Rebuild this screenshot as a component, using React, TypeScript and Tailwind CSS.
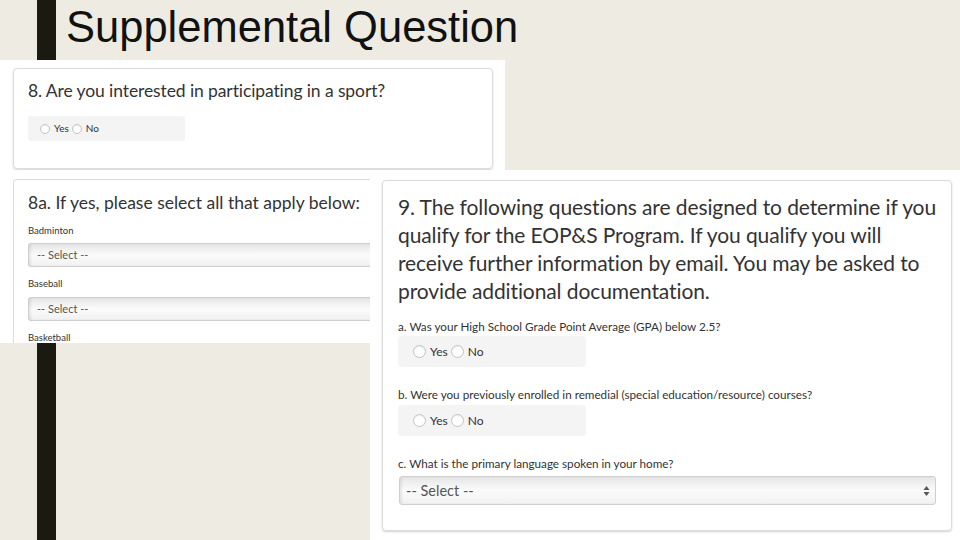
import React from "react";

function Radio({ size, text }: { size: string; text: string }) {
  return (
    <span className="inline-flex items-center">
      <span
        className={`${size} rounded-full border border-[#c4c4c4] bg-white shadow-[inset_0_1px_1px_rgba(0,0,0,0.08)]`}
      />
      <span className="ml-[4px]">{text}</span>
    </span>
  );
}

function SmallSelect() {
  return (
    <div className="h-[24px] w-[360px] rounded-l-[3px] border border-r-0 border-[#cfcfcf] bg-gradient-to-b from-[#e6e6e6] via-[#fbfbfb] to-[#f1f1f1] shadow-[inset_2px_0_2px_rgba(0,0,0,0.08)] flex items-center pl-[8px] text-[11px] text-[#555]">
      -- Select --
    </div>
  );
}

export default function App() {
  return (
    <div className="w-[960px] h-[540px] overflow-hidden bg-[#eeebe3] flex flex-col font-['Lato',sans-serif] text-[#333]">
      {/* title row */}
      <div className="h-[60px] flex shrink-0">
        <div className="ml-[37px] w-[19px] h-full bg-[#1a1a10]" />
        <div className="ml-[10px] mt-[2px] font-['Liberation_Sans',Arial,sans-serif] text-[43.5px] leading-[50px] text-[#111]">
          Supplemental Question
        </div>
      </div>

      {/* screenshot 1 */}
      <div className="w-[505px] h-[110px] bg-white pt-[8px] pl-[13px] pr-[12px] shrink-0">
        <div className="h-[101px] rounded-[4px] border border-[#dcdcdc] shadow-[0_1px_2px_rgba(0,0,0,0.18)] pl-[14px] pt-[10px]">
          <div className="text-[17.5px] leading-[24px] text-[#333] tracking-[-0.1px]">
            8. Are you interested in participating in a sport?
          </div>
          <div className="mt-[13px] w-[157px] h-[25px] rounded-[3px] bg-[#f4f4f4] flex items-center pl-[12px] gap-[3px] text-[10px] text-[#333]">
            <Radio size="w-[10px] h-[10px]" text="Yes" />
            <Radio size="w-[10px] h-[10px]" text="No" />
          </div>
        </div>
      </div>

      {/* bottom row */}
      <div className="flex flex-1">
        <div className="w-[370px] flex flex-col">
          <div className="h-[173px] bg-white pt-[9px] pl-[13px] overflow-hidden">
            <div className="h-[200px] rounded-tl-[4px] border-l border-t border-[#dcdcdc] pl-[14px] pt-[11px]">
              <div className="text-[17.5px] leading-[24px] whitespace-nowrap">
                8a. If yes, please select all that apply below:
              </div>
              <div className="mt-[10px] text-[9.5px] leading-[12px] font-normal">Badminton</div>
              <div className="mt-[6px]">
                <SmallSelect />
              </div>
              <div className="mt-[11px] text-[9.5px] leading-[12px]">Baseball</div>
              <div className="mt-[7px]">
                <SmallSelect />
              </div>
              <div className="mt-[11px] text-[9.5px] leading-[12px]">Basketball</div>
            </div>
          </div>
          <div className="flex-1 flex">
            <div className="ml-[37px] w-[19px] bg-[#1a1a10]" />
          </div>
        </div>

        <div className="w-[590px] bg-white pt-[10px] pl-[12px] pr-[8px]">
          <div className="h-[351px] rounded-[4px] border border-[#dcdcdc] shadow-[0_1px_2px_rgba(0,0,0,0.18)] pl-[15px] pr-[12px] pt-[12px]">
            <div className="w-[540px] text-[21px] leading-[28px] tracking-[-0.1px] text-[#333]">
              9. The following questions are designed to determine if you qualify for the EOP&amp;S Program. If you qualify you will receive further information by email. You may be asked to provide additional documentation.
            </div>
            <div className="mt-[14px] text-[11.7px] leading-[14px]">
              a. Was your High School Grade Point Average (GPA) below 2.5?
            </div>
            <div className="mt-[3px] w-[188px] h-[31px] rounded-[4px] bg-[#f4f4f4] flex items-center pl-[15px] gap-[3px] text-[12px]">
              <Radio size="w-[13px] h-[13px]" text="Yes" />
              <Radio size="w-[13px] h-[13px]" text="No" />
            </div>
            <div className="mt-[20px] text-[11.7px] leading-[14px]">
              b. Were you previously enrolled in remedial (special education/resource) courses?
            </div>
            <div className="mt-[4px] w-[188px] h-[31px] rounded-[4px] bg-[#f4f4f4] flex items-center pl-[15px] gap-[3px] text-[12px]">
              <Radio size="w-[13px] h-[13px]" text="Yes" />
              <Radio size="w-[13px] h-[13px]" text="No" />
            </div>
            <div className="mt-[20px] text-[11.7px] leading-[14px]">
              c. What is the primary language spoken in your home?
            </div>
            <div className="mt-[6px] ml-[1px] h-[29px] w-[537px] rounded-[3px] border border-[#cfcfcf] bg-gradient-to-b from-[#e6e6e6] via-[#fbfbfb] to-[#f1f1f1] shadow-[inset_2px_0_2px_rgba(0,0,0,0.08)] flex items-center justify-between pl-[6px] pr-[5px] text-[14.5px] text-[#555]">
              <span>-- Select --</span>
              <svg width="7" height="12" viewBox="0 0 7 12">
                <path d="M3.5 1 L6.5 5 L0.5 5 Z" fill="#555" />
                <path d="M3.5 11 L6.5 7 L0.5 7 Z" fill="#555" />
              </svg>
            </div>
          </div>
        </div>
      </div>
    </div>
  );
}
